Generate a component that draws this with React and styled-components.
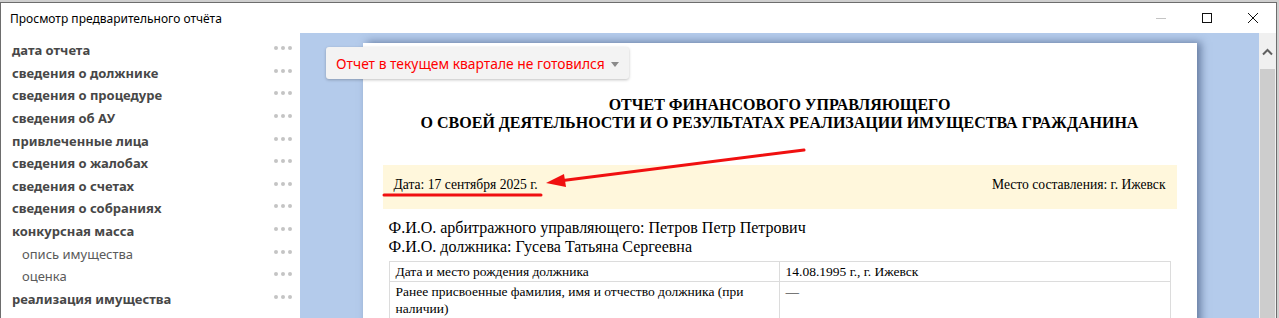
import styled, { createGlobalStyle } from "styled-components";

const GlobalStyle = createGlobalStyle`
  html, body {
    margin: 0;
    padding: 0;
    height: 318px;
    overflow: hidden;
    background: #cfcfcf;
  }
  #root {
    padding: 2px 0 0 0;
  }
`;

const Window = styled.div`
  width: 1275px;
  height: 340px;
  border: 1px solid #6d6d6d;
  background: #fff;
  display: flex;
  flex-direction: column;
  font-family: "Noto Sans", "Open Sans", sans-serif;
`;

const TitleBar = styled.div`
  height: 30px;
  display: flex;
  align-items: center;
  justify-content: space-between;
  padding-left: 9px;
`;

const Title = styled.span`
  font-size: 12px;
  color: #000;
`;

const Controls = styled.div`
  display: flex;
  height: 100%;
`;

const ControlButton = styled.div`
  width: 46px;
  height: 100%;
  display: flex;
  align-items: center;
  justify-content: center;
`;

const Body = styled.div`
  flex: 1;
  display: flex;
  min-height: 0;
`;

const Sidebar = styled.div`
  width: 299px;
  padding-top: 6px;
  box-sizing: border-box;
`;

const NavItem = styled.div`
  height: 22.6px;
  display: flex;
  align-items: center;
  justify-content: space-between;
  padding: 0 8px 0 ${({ $sub }) => ($sub ? "21px" : "11px")};
  font-size: 13px;
  font-weight: ${({ $sub }) => ($sub ? 400 : 700)};
  color: ${({ $sub }) => ($sub ? "#5a5a5a" : "#474747")};
`;

const Dots = styled.span`
  display: flex;
  gap: 3px;
  margin-top: -4px;

  & > i {
    width: 4px;
    height: 4px;
    border-radius: 50%;
    background: #c4c4c4;
  }
`;

const Viewer = styled.div`
  flex: 1;
  background: #b4cbeb;
  position: relative;
  overflow: hidden;
  display: flex;
  justify-content: center;
  padding-top: 10px;
`;

const StatusDropdown = styled.div`
  position: absolute;
  top: 14px;
  left: 26px;
  height: 32px;
  padding: 0 10px 0 10px;
  display: flex;
  align-items: center;
  gap: 6px;
  background: #f3f3f3;
  border-radius: 3px;
  box-shadow: 0 1px 3px rgba(0, 0, 0, 0.25);
  color: #ff0000;
  font-size: 13.85px;
  z-index: 2;
`;

const Caret = styled.span`
  width: 0;
  height: 0;
  border-left: 4px solid transparent;
  border-right: 4px solid transparent;
  border-top: 5px solid #8a8a8a;
  margin-top: 2px;
`;

const Page = styled.div`
  width: 834px;
  flex-shrink: 0;
  background: #fff;
  position: relative;
  padding: 53px 20px 0;
  box-sizing: border-box;
  box-shadow: 4px -1px 8px rgba(40, 60, 100, 0.55);
  font-family: "Liberation Serif", "Times New Roman", serif;
  color: #000;
`;

const ReportTitle = styled.h1`
  margin: 0;
  text-align: center;
  font-size: 16px;
  line-height: 18px;
  font-weight: 700;
`;

const InfoBand = styled.div`
  margin-top: 33px;
  height: 44px;
  background: #fff7dc;
  display: flex;
  align-items: flex-end;
  justify-content: space-between;
  padding: 0 11px 16px;
  box-sizing: border-box;
  font-size: 13.6px;
`;

const Names = styled.div`
  padding: 9px 6px 0;
  font-size: 16px;
  line-height: 19px;
`;

const Table = styled.table`
  margin: 5px 6px 0;
  width: 782px;
  border-collapse: collapse;
  font-size: 13.5px;
  line-height: 17px;

  td {
    border: 1px solid #dcdcdc;
    padding: 1px 6px;
    vertical-align: top;
  }
  td:first-child {
    width: 377px;
  }
`;

const Annotation = styled.svg`
  position: absolute;
  left: 0;
  top: 0;
  pointer-events: none;
`;

const Scrollbar = styled.div`
  width: 17px;
  background: #f0f0f0;
  display: flex;
  flex-direction: column;
  align-items: center;
`;

const ScrollArrow = styled.div`
  height: 34px;
  display: flex;
  align-items: center;
  justify-content: center;
  padding-top: 2px;
`;

const ScrollThumb = styled.div`
  width: 15px;
  flex: 1;
  background: #cdcdcd;
`;

const navItems = [
  { label: "дата отчета" },
  { label: "сведения о должнике" },
  { label: "сведения о процедуре" },
  { label: "сведения об АУ" },
  { label: "привлеченные лица" },
  { label: "сведения о жалобах" },
  { label: "сведения о счетах" },
  { label: "сведения о собраниях" },
  { label: "конкурсная масса" },
  { label: "опись имущества", sub: true },
  { label: "оценка", sub: true },
  { label: "реализация имущества" },
];

export default function App() {
  return (
    <>
      <GlobalStyle />
      <Window>
        <TitleBar>
          <Title>Просмотр предварительного отчёта</Title>
          <Controls>
            <ControlButton>
              <svg width="10" height="10" viewBox="0 0 10 10">
                <path d="M0 5.5h10" stroke="#c4c4c4" strokeWidth="1" />
              </svg>
            </ControlButton>
            <ControlButton>
              <svg width="10" height="10" viewBox="0 0 10 10">
                <rect x="0.5" y="0.5" width="9" height="9" fill="none" stroke="#111" strokeWidth="1" />
              </svg>
            </ControlButton>
            <ControlButton>
              <svg width="10" height="10" viewBox="0 0 10 10">
                <path d="M0 0L10 10M10 0L0 10" stroke="#111" strokeWidth="1" />
              </svg>
            </ControlButton>
          </Controls>
        </TitleBar>
        <Body>
          <Sidebar>
            {navItems.map((item) => (
              <NavItem key={item.label} $sub={item.sub}>
                <span>{item.label}</span>
                <Dots>
                  <i />
                  <i />
                  <i />
                </Dots>
              </NavItem>
            ))}
          </Sidebar>
          <Viewer>
            <StatusDropdown>
              Отчет в текущем квартале не готовился
              <Caret />
            </StatusDropdown>
            <Page>
              <ReportTitle>
                ОТЧЕТ ФИНАНСОВОГО УПРАВЛЯЮЩЕГО
                <br />
                О СВОЕЙ ДЕЯТЕЛЬНОСТИ И О РЕЗУЛЬТАТАХ РЕАЛИЗАЦИИ ИМУЩЕСТВА ГРАЖДАНИНА
              </ReportTitle>
              <InfoBand>
                <span>Дата: 17 сентября 2025 г.</span>
                <span>Место составления: г. Ижевск</span>
              </InfoBand>
              <Names>
                Ф.И.О. арбитражного управляющего: Петров Петр Петрович
                <br />
                Ф.И.О. должника: Гусева Татьяна Сергеевна
              </Names>
              <Table>
                <tbody>
                  <tr>
                    <td>Дата и место рождения должника</td>
                    <td>14.08.1995 г., г. Ижевск</td>
                  </tr>
                  <tr>
                    <td>Ранее присвоенные фамилия, имя и отчество должника (при наличии)</td>
                    <td>—</td>
                  </tr>
                </tbody>
              </Table>
              <Annotation width="834" height="300" viewBox="0 0 834 300">
                <path d="M441 107 L196 138" stroke="#f01010" strokeWidth="3" strokeLinecap="round" />
                <path d="M183 140 L201 131 L203 144 Z" fill="#f01010" />
                <path d="M21 152 L178 152" stroke="#f01010" strokeWidth="3" strokeLinecap="round" />
              </Annotation>
            </Page>
          </Viewer>
          <Scrollbar>
            <ScrollArrow>
              <svg width="11" height="8" viewBox="0 0 11 8">
                <path d="M1 6.5L5.5 2L10 6.5" stroke="#606060" strokeWidth="2" fill="none" />
              </svg>
            </ScrollArrow>
            <ScrollThumb />
          </Scrollbar>
        </Body>
      </Window>
    </>
  );
}
